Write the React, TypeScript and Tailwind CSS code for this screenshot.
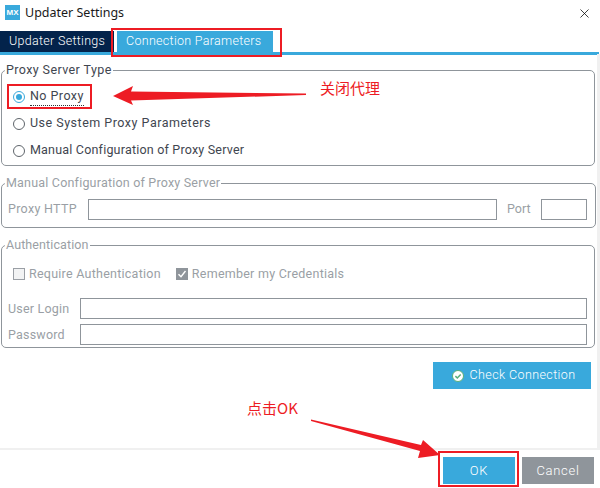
import type { ReactNode } from "react";
import { X } from "lucide-react";

const uiFont = "font-['Roboto','Liberation_Sans',sans-serif]";

function Group({ title, className, legendClass, children }: { title: string; className: string; legendClass: string; children: ReactNode }) {
  return (
    <fieldset className={`mx-px w-[594px] rounded-[5px] border border-[#8f959b] pl-[5px] ${className}`}>
      <legend className={`ml-[-2px] h-[14px] px-px text-[12.5px] leading-[14px] ${legendClass}`}>{title}</legend>
      {children}
    </fieldset>
  );
}

function Radio({ label, checked, tracking }: { label: string; checked?: boolean; tracking: string }) {
  return (
    <div className={`flex h-[27px] items-center gap-[5px] pl-[6px] text-[12.5px] text-[#3f4650] ${tracking}`}>
      <span className={`flex h-3 w-3 items-center justify-center rounded-full border ${checked ? "border-[#39a9dc]" : "border-[#5f656b]"}`}>
        {checked && <span className="h-[6px] w-[6px] rounded-full bg-[#39a9dc]" />}
      </span>
      {checked ? <span className="border-b border-dotted border-[#333]">{label}</span> : <span>{label}</span>}
    </div>
  );
}

function Field({ label }: { label: string }) {
  return (
    <div className="flex h-[21px] items-center pr-[7px]">
      <span className="w-[73px] pl-[1px] pt-[1px] text-[12.5px] tracking-[0.2px]">{label}</span>
      <span className="h-[21px] flex-1 border border-[#8f959b] bg-white" />
    </div>
  );
}

function MxLogo() {
  return (
    <span className="flex h-[15px] w-[15px] items-center justify-center bg-[#39a9dc] font-['Liberation_Sans',sans-serif] text-[8px] font-bold text-white">
      MX
    </span>
  );
}

export default function App() {
  return (
    <div className={`relative h-[488px] w-[600px] overflow-hidden bg-white ${uiFont}`}>
      <header className="flex h-[31px] items-start justify-between pl-[5px] pr-[8px] pt-[5px]">
        <div className="flex items-center gap-[5px]">
          <MxLogo />
          <span className="font-['Noto_Sans',sans-serif] text-[12.5px] leading-[15px] text-[#1a1a1a]">Updater Settings</span>
        </div>
        <X size={15} strokeWidth={1.2} className="mt-px text-black" />
      </header>

      <div className="flex h-[21px] items-stretch bg-white text-[12.5px] font-light tracking-[0.3px] text-white">
        <div className="flex w-[114px] items-center bg-[#03234b] pl-[9px]">Updater Settings</div>
        <div className="ml-[3px] flex w-[156px] items-center bg-[#39a9dc] pl-[9px]">Connection Parameters</div>
      </div>
      <div className="h-[3px] w-[599px] bg-[#39a9dc]" />

      <div className="flex h-[393px] w-[597px] flex-col pt-[8px]">
        <Group title="Proxy Server Type" className="h-[103px] text-[#3f4650]" legendClass="tracking-[0.4px]">
          <div className="pt-[6px]">
            <Radio label="No Proxy" checked tracking="tracking-[0.45px]" />
            <Radio label="Use System Proxy Parameters" tracking="tracking-[0.5px]" />
            <Radio label="Manual Configuration of Proxy Server" tracking="tracking-[0.2px]" />
          </div>
        </Group>

        <Group title="Manual Configuration of Proxy Server" className="mt-[10px] h-[52px] text-[#9a9fa5]" legendClass="tracking-[0.2px]">
          <div className="mt-[9px] flex h-[21px] items-center pr-[8px]">
            <span className="w-[81px] pl-[1px] text-[12.5px] tracking-[0.3px]">Proxy HTTP</span>
            <span className="h-[21px] w-[409px] border border-[#8f959b]" />
            <span className="ml-[10px] w-[34px] text-[12.5px]">Port</span>
            <span className="h-[21px] w-[46px] border border-[#8f959b]" />
          </div>
        </Group>

        <Group title="Authentication" className="mt-[10px] h-[110px] text-[#9a9fa5]" legendClass="tracking-[0.1px]">
          <div className="flex h-[44px] items-center gap-[15px] pl-[6px] text-[12.5px] tracking-[0.25px]">
            <div className="flex items-center gap-[4px]">
              <span className="h-3 w-3 border border-[#9a9fa5] bg-[#f2f3f4]" />
              Require Authentication
            </div>
            <div className="flex items-center gap-[4px]">
              <span className="flex h-3 w-3 items-center justify-center bg-[#8f959b]">
                <svg viewBox="0 0 12 12" className="h-3 w-3" fill="none" stroke="white" strokeWidth="1.4">
                  <path d="M2.5 6.2 5 8.8 9.5 3" />
                </svg>
              </span>
              Remember my Credentials
            </div>
          </div>
          <div className="mt-[2px] flex flex-col gap-[5px]">
            <Field label="User Login" />
            <Field label="Password" />
          </div>
        </Group>

        <div className="mr-[6px] mt-[14px] flex justify-end">
          <button className="flex h-[27px] w-[158px] items-center justify-center gap-[6px] bg-[#39a9dc] pl-[3px] text-[12.5px] font-light tracking-[0.4px] text-white">
            <svg viewBox="0 0 12 12" className="h-3 w-3">
              <circle cx="6" cy="6" r="5.5" fill="white" stroke="#5aaf7a" />
              <path d="M3.4 6.1 5.3 8 8.7 4.4" fill="none" stroke="#5aaf7a" strokeWidth="1.5" />
            </svg>
            Check Connection
          </button>
        </div>
      </div>

      {/* grey window edges */}
      <div className="absolute left-[597px] top-[54px] h-[396px] w-[3px] bg-[#f0f0f0]" />
      <div className="h-[2px] w-[600px] bg-[#f0f0f0]" />

      <footer className="flex justify-end gap-[7px] pr-[6px] pt-[7px] text-[13px] font-light tracking-[0.7px] text-white">
        <button className="h-[27px] w-[72px] bg-[#39a9dc]">OK</button>
        <button className="h-[27px] w-[72px] bg-[#8f959b]">Cancel</button>
      </footer>

      {/* red annotations on top of the screenshot */}
      <div className="absolute left-[111px] top-[28px] h-[29px] w-[171px] border-2 border-[#ed1c24]" />
      <div className="absolute left-[7px] top-[84px] h-[25px] w-[85px] border-2 border-[#ed1c24]" />
      <div className="absolute left-[438px] top-[451px] h-[36px] w-[81px] border-2 border-[#ed1c24]" />
      <svg className="absolute left-0 top-0 h-[488px] w-[600px]" viewBox="0 0 600 488" fill="#ed1c24">
        <polygon points="113,96 133,86 131,91.5 306,93.5 306,95 131,100.5 133,105" />
        <polygon points="311,419.5 421,445 423,440 440,455 418,458 420,451 311,421" />
      </svg>
      <span className="absolute left-[320px] top-[77px] font-['Noto_Sans_CJK_SC',sans-serif] text-[15px] leading-[22px] text-[#ed1c24]">关闭代理</span>
      <span className="absolute left-[247px] top-[397px] font-['Noto_Sans_CJK_SC',sans-serif] text-[15px] leading-[22px] text-[#ed1c24]">点击OK</span>
    </div>
  );
}
